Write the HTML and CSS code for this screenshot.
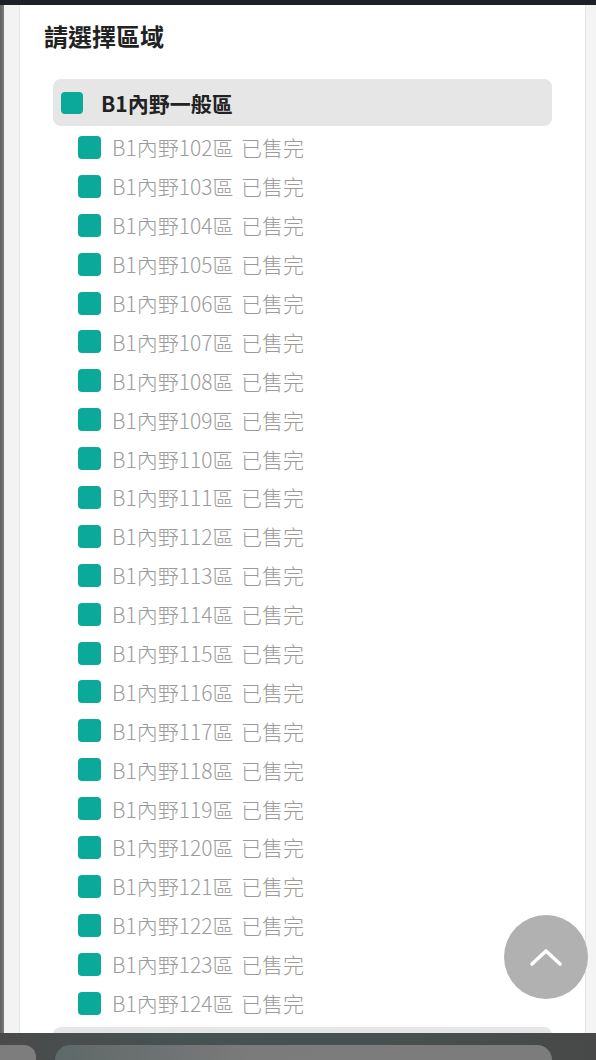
FILE: index.html
```html
<!DOCTYPE html>
<html lang="zh-Hant">
<head>
  <meta charset="UTF-8" />
  <title>請選擇區域</title>
  <link rel="stylesheet" href="styles.css">
</head>
<body>

  <div class="status-strip"></div>

  <div class="frame">
    <div class="side side-left"></div>

    <!-- 區域選單 -->
    <div class="panel">
      <h2 class="panel-title">請選擇區域</h2>

      <div class="area-group">
        <div class="group-head">
          <span class="swatch"></span>
          <span>B1內野一般區</span>
        </div>
        <ul class="area-list">
          <li><span class="swatch"></span>B1內野102區 已售完</li>
          <li><span class="swatch"></span>B1內野103區 已售完</li>
          <li><span class="swatch"></span>B1內野104區 已售完</li>
          <li><span class="swatch"></span>B1內野105區 已售完</li>
          <li><span class="swatch"></span>B1內野106區 已售完</li>
          <li><span class="swatch"></span>B1內野107區 已售完</li>
          <li><span class="swatch"></span>B1內野108區 已售完</li>
          <li><span class="swatch"></span>B1內野109區 已售完</li>
          <li><span class="swatch"></span>B1內野110區 已售完</li>
          <li><span class="swatch"></span>B1內野111區 已售完</li>
          <li><span class="swatch"></span>B1內野112區 已售完</li>
          <li><span class="swatch"></span>B1內野113區 已售完</li>
          <li><span class="swatch"></span>B1內野114區 已售完</li>
          <li><span class="swatch"></span>B1內野115區 已售完</li>
          <li><span class="swatch"></span>B1內野116區 已售完</li>
          <li><span class="swatch"></span>B1內野117區 已售完</li>
          <li><span class="swatch"></span>B1內野118區 已售完</li>
          <li><span class="swatch"></span>B1內野119區 已售完</li>
          <li><span class="swatch"></span>B1內野120區 已售完</li>
          <li><span class="swatch"></span>B1內野121區 已售完</li>
          <li><span class="swatch"></span>B1內野122區 已售完</li>
          <li><span class="swatch"></span>B1內野123區 已售完</li>
          <li><span class="swatch"></span>B1內野124區 已售完</li>
        </ul>
      </div>

      <!-- 下一組（被底部工具列遮住） -->
      <div class="area-group">
        <div class="group-head"></div>
      </div>
    </div>

    <div class="side side-right"></div>
  </div>

  <!-- 回到頂端 -->
  <button class="to-top" aria-label="回到頂端">
    <svg width="34" height="22" viewBox="0 0 34 22">
      <polyline points="3,18 17,5 31,18" fill="none" stroke="#fff" stroke-width="3.6" stroke-linecap="round" stroke-linejoin="round"/>
    </svg>
  </button>

  <!-- 瀏覽器底部工具列 -->
  <div class="bottom-bar">
    <div class="tab tab-small"></div>
    <div class="tab tab-wide"></div>
  </div>

</body>
</html>
```

FILE: styles.css
```css
html, body {
  height: 100%;
}

body {
  margin: 0;
  padding: 0;
  background-color: #f4f4f4;
  font-family: 'Noto Sans CJK TC', 'Noto Sans', sans-serif;
  color: #222;
  overflow: hidden;
}

/* 頂端深色條 */
.status-strip {
  height: 5px;
  background-color: #1d2027;
}

.frame {
  display: flex;
  align-items: stretch;
  min-height: 1055px;
}

.side {
  flex: none;
}

.side-left {
  width: 19px;
  background: linear-gradient(to right, #626262 0, #7a7a7a 4px, #f3f3f3 4px, #f3f3f3 100%);
  border-right: 1px solid #e6e6e6;
}

.side-right {
  width: 10px;
  background-color: #f4f4f4;
  border-left: 1px solid #e4e4e4;
}

.panel {
  flex: 1;
  background-color: #fff;
  padding: 14px 33px 0 24px;
}

.panel-title {
  margin: 0 0 26px 0;
  font-size: 24px;
  line-height: 34px;
  font-weight: bold;
  color: #222;
}

.area-group {
  margin-left: 9px;
  margin-bottom: 5px;
}

.group-head {
  display: flex;
  align-items: center;
  gap: 18px;
  height: 47px;
  padding: 0 8px;
  background-color: #e6e6e6;
  border-radius: 8px;
  font-size: 21px;
  font-weight: bold;
  color: #222;
}

.swatch {
  flex: none;
  width: 23px;
  height: 23px;
  border-radius: 4px;
  background-color: #0ba99a;
}

.group-head .swatch {
  width: 22px;
  height: 22px;
}

.area-list {
  list-style: none;
  margin: 2px 0 0 0;
  padding: 0 0 0 25px;
}

.area-list li {
  display: flex;
  align-items: center;
  gap: 11px;
  height: 38.9px;
  font-size: 21px;
  font-weight: 300;
  color: #9b9b9b;
  word-spacing: 3px;
}

/* 回到頂端按鈕 */
.to-top {
  position: fixed;
  left: 504px;
  top: 915px;
  width: 84px;
  height: 84px;
  border: none;
  border-radius: 50%;
  background-color: #b1b1b1;
  display: flex;
  align-items: center;
  justify-content: center;
  padding: 0;
  cursor: pointer;
}

.bottom-bar {
  position: fixed;
  left: 0;
  right: 0;
  bottom: 0;
  height: 27px;
  background: linear-gradient(to right, #4a4a4a, #475252 30%, #474f4f 70%, #484848);
  display: flex;
  align-items: flex-end;
  gap: 19px;
}

.tab {
  height: 15px;
  background-color: #7b7b7b;
}

.tab-small {
  width: 36px;
  border-radius: 0 12px 0 0;
  background-color: #7d7d7d;
}

.tab-wide {
  width: 497px;
  border-radius: 16px 16px 0 0;
  background: linear-gradient(to right, #5e6868, #7b7b7b 40%, #7c7c7c);
}
```
